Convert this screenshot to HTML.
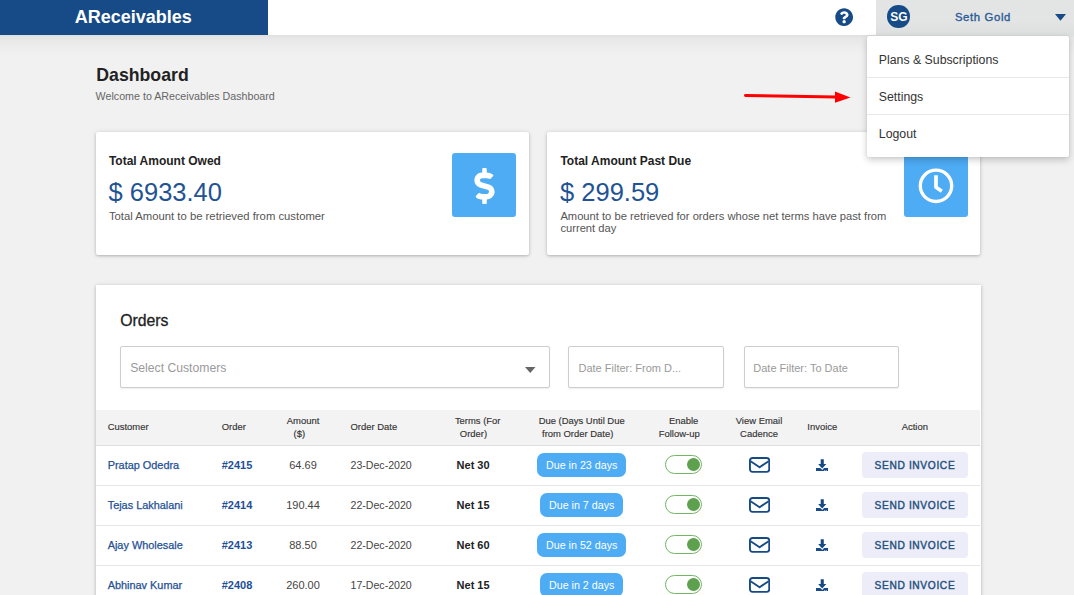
<!DOCTYPE html>
<html><head><meta charset="utf-8"><style>
html,body{margin:0;padding:0;}
body{width:1074px;height:595px;overflow:hidden;position:relative;background:#f1f1f1;font-family:"Liberation Sans", sans-serif;}
</style></head><body>
<div style="position:absolute;left:0.00px;top:35.00px;width:1074.00px;height:21.00px;background:linear-gradient(to bottom, rgba(0,0,0,0.075), rgba(0,0,0,0.045) 15%, rgba(0,0,0,0.02) 55%, rgba(0,0,0,0));"></div>
<div style="position:absolute;left:0.00px;top:0.00px;width:1074.00px;height:35.00px;background:#fff;"></div>
<div style="position:absolute;left:0.00px;top:0.00px;width:268.00px;height:35.00px;background:#174b87;"></div>
<div style="position:absolute;left:74.70px;top:7.56px;font-size:18px;line-height:18px;white-space:nowrap;color:#fff;font-weight:bold;">AReceivables</div>
<svg style="position:absolute;left:834.8px;top:8.2px" width="18.3" height="18.3" viewBox="0 0 512 512"><path fill="#174b87" d="M504 256c0 136.997-111.043 248-248 248S8 392.997 8 256C8 119.083 119.043 8 256 8s248 111.083 248 248zM262.655 90c-54.497 0-89.255 22.957-116.549 63.758-3.536 5.286-2.353 12.415 2.715 16.258l34.699 26.31c5.205 3.947 12.621 3.008 16.665-2.122 17.864-22.658 30.113-35.797 57.303-35.797 20.429 0 45.698 13.148 45.698 32.958 0 14.976-12.363 22.667-32.534 33.976C247.128 238.528 216 254.941 216 296v4c0 6.627 5.373 12 12 12h56c6.627 0 12-5.373 12-12v-1.333c0-28.462 83.186-29.647 83.186-106.667 0-58.002-60.165-102-116.531-102zM256 338c-25.365 0-46 20.635-46 46 0 25.364 20.635 46 46 46s46-20.636 46-46c0-25.365-20.635-46-46-46z"/></svg>
<div style="position:absolute;left:875.70px;top:0.00px;width:198.30px;height:35.00px;background:linear-gradient(to bottom, #e3e4e4 62%, #dddede);"></div>
<div style="position:absolute;left:887.3px;top:5.2px;width:22.5px;height:22.5px;border-radius:50%;background:#174b87;"></div>
<div style="position:absolute;left:883.90px;top:10.74px;width:30px;text-align:center;font-size:12px;line-height:12px;white-space:nowrap;color:#fff;font-weight:bold;">SG</div>
<div style="position:absolute;left:954.90px;top:12.03px;font-size:11.3px;line-height:11.3px;white-space:nowrap;color:#2a5b96;-webkit-text-stroke:0.35px #2a5b96;letter-spacing:0.65px;">Seth Gold</div>
<svg style="position:absolute;left:1055px;top:14px" width="11" height="7" viewBox="0 0 11 7"><path fill="#174b87" d="M0 0H11L5.5 6.7Z"/></svg>
<div style="position:absolute;left:96.30px;top:66.52px;font-size:17.7px;line-height:17.7px;white-space:nowrap;color:#222;font-weight:bold;">Dashboard</div>
<div style="position:absolute;left:95.60px;top:90.64px;font-size:10.7px;line-height:10.7px;white-space:nowrap;color:#666;">Welcome to AReceivables Dashboard</div>
<div style="position:absolute;left:96.00px;top:132.00px;width:432.50px;height:122.50px;background:#fff;border-radius:2px;box-shadow:0 1px 3px rgba(0,0,0,0.24), 0 0 6px rgba(0,0,0,0.07);"></div>
<div style="position:absolute;left:547.00px;top:132.00px;width:433.00px;height:122.50px;background:#fff;border-radius:2px;box-shadow:0 1px 3px rgba(0,0,0,0.24), 0 0 6px rgba(0,0,0,0.07);"></div>
<div style="position:absolute;left:108.90px;top:154.54px;font-size:12px;line-height:12px;white-space:nowrap;color:#222;font-weight:bold;">Total Amount Owed</div>
<div style="position:absolute;left:108.50px;top:179.81px;font-size:25.5px;line-height:25.5px;white-space:nowrap;color:#1f5394;">$ 6933.40</div>
<div style="position:absolute;left:108.90px;top:211.33px;font-size:11.3px;line-height:11.3px;white-space:nowrap;color:#555;">Total Amount to be retrieved from customer</div>
<div style="position:absolute;left:452.00px;top:153.00px;width:64.00px;height:64.00px;background:#4dacf4;border-radius:3px;"></div>
<svg style="position:absolute;left:473.5px;top:167.5px" width="21" height="36" viewBox="0 0 288 512"><path fill="#fff" d="M209.2 233.4l-108-31.6C88.700 198.200 80 186.500 80 173.500c0-16.300 13.200-29.500 29.500-29.500h66.300c12.200 0 24.200 3.700 34.200 10.500 6.100 4.100 14.300 3.100 19.500-2l34.800-34c7.100-6.900 6.100-18.400-1.800-24.500C238 74.800 207.400 64.100 176 64V16c0-8.800-7.200-16-16-16h-32c-8.800 0-16 7.200-16 16v48h-2.500C45.800 64-5.400 118.700.5 183.600c4.200 46.100 39.400 83.600 83.800 96.600l102.500 30c12.500 3.700 21.200 15.300 21.200 28.300 0 16.300-13.200 29.500-29.500 29.500h-66.300C100 368 88 364.300 78 357.500c-6.100-4.100-14.300-3.100-19.500 2l-34.800 34c-7.100 6.900-6.100 18.400 1.800 24.500 24.500 19.200 55.100 29.900 86.500 30v48c0 8.800 7.200 16 16 16h32c8.800 0 16-7.200 16-16v-48.200c46.600-.9 90.300-28.600 105.700-72.700 21.500-61.600-14.600-124.800-72.500-141.700z"/></svg>
<div style="position:absolute;left:560.40px;top:154.54px;font-size:12px;line-height:12px;white-space:nowrap;color:#222;font-weight:bold;">Total Amount Past Due</div>
<div style="position:absolute;left:560.00px;top:179.81px;font-size:25.5px;line-height:25.5px;white-space:nowrap;color:#1f5394;">$ 299.59</div>
<div style="position:absolute;left:560.40px;top:210.84px;font-size:11.18px;line-height:11.18px;white-space:nowrap;color:#555;">Amount to be retrieved for orders whose net terms have past from</div>
<div style="position:absolute;left:560.40px;top:222.84px;font-size:11.18px;line-height:11.18px;white-space:nowrap;color:#555;">current day</div>
<div style="position:absolute;left:904.00px;top:153.00px;width:64.00px;height:64.00px;background:#4dacf4;border-radius:3px;"></div>
<svg style="position:absolute;left:918px;top:167.5px" width="36" height="36" viewBox="0 0 36 36"><circle cx="18" cy="17.8" r="15.7" fill="none" stroke="#fff" stroke-width="3.4"/><path d="M18 7.3V19.2L23.8 23.2" fill="none" stroke="#fff" stroke-width="3.7" stroke-linejoin="round"/></svg>
<div style="position:absolute;left:867.00px;top:36.00px;width:202.00px;height:121.00px;background:#fff;border-radius:2px;box-shadow:0 3px 7px rgba(0,0,0,0.2), 0 0 3px rgba(0,0,0,0.08);"></div>
<div style="position:absolute;left:867.00px;top:77.00px;width:202.00px;height:1.00px;background:#e8e8e8;"></div>
<div style="position:absolute;left:867.00px;top:114.00px;width:202.00px;height:1.00px;background:#e8e8e8;"></div>
<div style="position:absolute;left:878.80px;top:53.89px;font-size:12.3px;line-height:12.3px;white-space:nowrap;color:#333;">Plans &amp; Subscriptions</div>
<div style="position:absolute;left:878.80px;top:90.99px;font-size:12.3px;line-height:12.3px;white-space:nowrap;color:#333;">Settings</div>
<div style="position:absolute;left:878.80px;top:128.19px;font-size:12.3px;line-height:12.3px;white-space:nowrap;color:#333;">Logout</div>
<svg style="position:absolute;left:0;top:0" width="1074" height="200"><path d="M745.5 95.5L836 97" stroke="#ff0000" stroke-width="3" stroke-linecap="round"/><path d="M835 91.4L835 102.8L850.5 97.5Z" fill="#ff0000"/></svg>
<div style="position:absolute;left:95.50px;top:285.00px;width:885.00px;height:355.00px;background:#fff;box-shadow:0 1px 3px rgba(0,0,0,0.22), 0 0 6px rgba(0,0,0,0.07);"></div>
<div style="position:absolute;left:120.20px;top:313.33px;font-size:15.8px;line-height:15.8px;white-space:nowrap;color:#222;-webkit-text-stroke:0.3px #222;">Orders</div>
<div style="position:absolute;left:120.00px;top:346.00px;width:429.50px;height:41.50px;border:1px solid #cdcdcd;box-sizing:border-box;border-radius:2px;background:#fff;box-shadow:0 1px 1.5px rgba(0,0,0,0.07);"></div>
<div style="position:absolute;left:130.20px;top:361.97px;font-size:12.2px;line-height:12.2px;white-space:nowrap;color:#9a9a9a;">Select Customers</div>
<svg style="position:absolute;left:525.3px;top:367px" width="10.5" height="6" viewBox="0 0 10.5 6"><path fill="#666" d="M0 0H10.5L5.25 6Z"/></svg>
<div style="position:absolute;left:568.40px;top:346.00px;width:155.60px;height:42.40px;border:1px solid #cdcdcd;box-sizing:border-box;border-radius:2px;background:#fff;box-shadow:0 1px 1.5px rgba(0,0,0,0.07);"></div>
<div style="position:absolute;left:578.50px;top:362.69px;font-size:11px;line-height:11px;white-space:nowrap;color:#9a9a9a;">Date Filter: From D...</div>
<div style="position:absolute;left:743.60px;top:346.00px;width:155.20px;height:42.40px;border:1px solid #cdcdcd;box-sizing:border-box;border-radius:2px;background:#fff;box-shadow:0 1px 1.5px rgba(0,0,0,0.07);"></div>
<div style="position:absolute;left:753.30px;top:362.69px;font-size:11px;line-height:11px;white-space:nowrap;color:#9a9a9a;">Date Filter: To Date</div>
<div style="position:absolute;left:96.00px;top:410.00px;width:884.00px;height:36.00px;background:#f3f3f3;border-bottom:1px solid #dedede;box-sizing:border-box;"></div>
<div style="position:absolute;left:107.70px;top:422.20px;font-size:9.45px;line-height:9.45px;white-space:nowrap;color:#333;-webkit-text-stroke:0.15px #333;">Customer</div>
<div style="position:absolute;left:221.70px;top:422.20px;font-size:9.45px;line-height:9.45px;white-space:nowrap;color:#333;-webkit-text-stroke:0.15px #333;">Order</div>
<div style="position:absolute;left:273.00px;top:415.50px;width:60px;text-align:center;font-size:9.45px;line-height:9.45px;white-space:nowrap;color:#333;-webkit-text-stroke:0.15px #333;">Amount</div>
<div style="position:absolute;left:269.30px;top:428.90px;width:60px;text-align:center;font-size:9.45px;line-height:9.45px;white-space:nowrap;color:#333;-webkit-text-stroke:0.15px #333;">($)</div>
<div style="position:absolute;left:350.50px;top:422.20px;font-size:9.45px;line-height:9.45px;white-space:nowrap;color:#333;-webkit-text-stroke:0.15px #333;">Order Date</div>
<div style="position:absolute;left:437.70px;top:415.50px;width:80px;text-align:center;font-size:9.45px;line-height:9.45px;white-space:nowrap;color:#333;-webkit-text-stroke:0.15px #333;">Terms (For</div>
<div style="position:absolute;left:433.50px;top:428.90px;width:80px;text-align:center;font-size:9.45px;line-height:9.45px;white-space:nowrap;color:#333;-webkit-text-stroke:0.15px #333;">Order)</div>
<div style="position:absolute;left:521.70px;top:415.50px;width:120px;text-align:center;font-size:9.45px;line-height:9.45px;white-space:nowrap;color:#333;-webkit-text-stroke:0.15px #333;">Due (Days Until Due</div>
<div style="position:absolute;left:517.70px;top:428.90px;width:120px;text-align:center;font-size:9.45px;line-height:9.45px;white-space:nowrap;color:#333;-webkit-text-stroke:0.15px #333;">from Order Date)</div>
<div style="position:absolute;left:643.70px;top:415.50px;width:80px;text-align:center;font-size:9.45px;line-height:9.45px;white-space:nowrap;color:#333;-webkit-text-stroke:0.15px #333;">Enable</div>
<div style="position:absolute;left:639.20px;top:428.90px;width:80px;text-align:center;font-size:9.45px;line-height:9.45px;white-space:nowrap;color:#333;-webkit-text-stroke:0.15px #333;">Follow-up</div>
<div style="position:absolute;left:719.00px;top:415.50px;width:80px;text-align:center;font-size:9.45px;line-height:9.45px;white-space:nowrap;color:#333;-webkit-text-stroke:0.15px #333;">View Email</div>
<div style="position:absolute;left:719.00px;top:428.90px;width:80px;text-align:center;font-size:9.45px;line-height:9.45px;white-space:nowrap;color:#333;-webkit-text-stroke:0.15px #333;">Cadence</div>
<div style="position:absolute;left:782.30px;top:422.20px;width:80px;text-align:center;font-size:9.45px;line-height:9.45px;white-space:nowrap;color:#333;-webkit-text-stroke:0.15px #333;">Invoice</div>
<div style="position:absolute;left:874.80px;top:422.20px;width:80px;text-align:center;font-size:9.45px;line-height:9.45px;white-space:nowrap;color:#333;-webkit-text-stroke:0.15px #333;">Action</div>
<div style="position:absolute;left:107.70px;top:460.27px;font-size:10.9px;line-height:10.9px;white-space:nowrap;color:#1f5096;-webkit-text-stroke:0.25px #1f5096;">Pratap Odedra</div>
<div style="position:absolute;left:221.70px;top:460.19px;font-size:11px;line-height:11px;white-space:nowrap;color:#1f5096;font-weight:bold;">#2415</div>
<div style="position:absolute;left:273.00px;top:460.19px;width:60px;text-align:center;font-size:11px;line-height:11px;white-space:nowrap;color:#444;">64.69</div>
<div style="position:absolute;left:350.50px;top:459.93px;font-size:10.6px;line-height:10.6px;white-space:nowrap;color:#444;">23-Dec-2020</div>
<div style="position:absolute;left:456.60px;top:460.19px;font-size:11px;line-height:11px;white-space:nowrap;color:#222;font-weight:bold;">Net 30</div>
<div style="position:absolute;left:537.00px;top:453.30px;width:89.40px;height:23.90px;background:#4dacf4;border-radius:7px;"></div>
<div style="position:absolute;left:531.70px;top:460.44px;width:100px;text-align:center;font-size:10.7px;line-height:10.7px;white-space:nowrap;color:#fff;">Due in 23 days</div>
<div style="position:absolute;left:664.90px;top:455.40px;width:37.40px;height:18.30px;border:1.4px solid #72b562;border-radius:10px;box-sizing:border-box;background:#fff;"></div>
<div style="position:absolute;left:686.7px;top:458.00px;width:13.4px;height:13.4px;border-radius:50%;background:#5da04e;"></div>
<svg style="position:absolute;left:748.8px;top:457.00px" width="21.2" height="15.8" viewBox="0 0 21.2 15.8"><rect x="0.95" y="0.95" width="19.3" height="13.9" rx="2.5" fill="none" stroke="#174b87" stroke-width="1.9"/><path d="M1.6 4.2L10.6 10.2L19.6 4.2" fill="none" stroke="#174b87" stroke-width="1.9" stroke-linejoin="round"/></svg>
<svg style="position:absolute;left:815.9px;top:458.80px" width="12.4" height="12.6" viewBox="0 0 12.4 12.6"><path fill="#174b87" d="M4.7 0.2H7.8V4.9H10.3L6.25 9.6L2.1 4.9H4.7Z"/><path fill="#174b87" d="M0 8.9H4.4L6.25 10.9L8.1 8.9H12.4V12.6H0Z"/><circle cx="8.6" cy="11.7" r="0.55" fill="#fff"/><circle cx="10.2" cy="11.7" r="0.55" fill="#fff"/></svg>
<div style="position:absolute;left:861.50px;top:452.20px;width:106.90px;height:26.00px;background:#ededf9;border-radius:4px;"></div>
<div style="position:absolute;left:874.50px;top:461.37px;font-size:10.2px;line-height:10.2px;white-space:nowrap;color:#25507e;-webkit-text-stroke:0.4px #25507e;letter-spacing:0.65px;">SEND INVOICE</div>
<div style="position:absolute;left:96.00px;top:485.00px;width:884.00px;height:1.00px;background:#e6e6e6;"></div>
<div style="position:absolute;left:107.70px;top:500.27px;font-size:10.9px;line-height:10.9px;white-space:nowrap;color:#1f5096;-webkit-text-stroke:0.25px #1f5096;">Tejas Lakhalani</div>
<div style="position:absolute;left:221.70px;top:500.19px;font-size:11px;line-height:11px;white-space:nowrap;color:#1f5096;font-weight:bold;">#2414</div>
<div style="position:absolute;left:273.00px;top:500.19px;width:60px;text-align:center;font-size:11px;line-height:11px;white-space:nowrap;color:#444;">190.44</div>
<div style="position:absolute;left:350.50px;top:499.93px;font-size:10.6px;line-height:10.6px;white-space:nowrap;color:#444;">22-Dec-2020</div>
<div style="position:absolute;left:456.60px;top:500.19px;font-size:11px;line-height:11px;white-space:nowrap;color:#222;font-weight:bold;">Net 15</div>
<div style="position:absolute;left:540.00px;top:493.30px;width:83.40px;height:23.90px;background:#4dacf4;border-radius:7px;"></div>
<div style="position:absolute;left:531.70px;top:500.44px;width:100px;text-align:center;font-size:10.7px;line-height:10.7px;white-space:nowrap;color:#fff;">Due in 7 days</div>
<div style="position:absolute;left:664.90px;top:495.40px;width:37.40px;height:18.30px;border:1.4px solid #72b562;border-radius:10px;box-sizing:border-box;background:#fff;"></div>
<div style="position:absolute;left:686.7px;top:498.00px;width:13.4px;height:13.4px;border-radius:50%;background:#5da04e;"></div>
<svg style="position:absolute;left:748.8px;top:497.00px" width="21.2" height="15.8" viewBox="0 0 21.2 15.8"><rect x="0.95" y="0.95" width="19.3" height="13.9" rx="2.5" fill="none" stroke="#174b87" stroke-width="1.9"/><path d="M1.6 4.2L10.6 10.2L19.6 4.2" fill="none" stroke="#174b87" stroke-width="1.9" stroke-linejoin="round"/></svg>
<svg style="position:absolute;left:815.9px;top:498.80px" width="12.4" height="12.6" viewBox="0 0 12.4 12.6"><path fill="#174b87" d="M4.7 0.2H7.8V4.9H10.3L6.25 9.6L2.1 4.9H4.7Z"/><path fill="#174b87" d="M0 8.9H4.4L6.25 10.9L8.1 8.9H12.4V12.6H0Z"/><circle cx="8.6" cy="11.7" r="0.55" fill="#fff"/><circle cx="10.2" cy="11.7" r="0.55" fill="#fff"/></svg>
<div style="position:absolute;left:861.50px;top:492.20px;width:106.90px;height:26.00px;background:#ededf9;border-radius:4px;"></div>
<div style="position:absolute;left:874.50px;top:501.37px;font-size:10.2px;line-height:10.2px;white-space:nowrap;color:#25507e;-webkit-text-stroke:0.4px #25507e;letter-spacing:0.65px;">SEND INVOICE</div>
<div style="position:absolute;left:96.00px;top:525.00px;width:884.00px;height:1.00px;background:#e6e6e6;"></div>
<div style="position:absolute;left:107.70px;top:540.27px;font-size:10.9px;line-height:10.9px;white-space:nowrap;color:#1f5096;-webkit-text-stroke:0.25px #1f5096;">Ajay Wholesale</div>
<div style="position:absolute;left:221.70px;top:540.19px;font-size:11px;line-height:11px;white-space:nowrap;color:#1f5096;font-weight:bold;">#2413</div>
<div style="position:absolute;left:273.00px;top:540.19px;width:60px;text-align:center;font-size:11px;line-height:11px;white-space:nowrap;color:#444;">88.50</div>
<div style="position:absolute;left:350.50px;top:539.93px;font-size:10.6px;line-height:10.6px;white-space:nowrap;color:#444;">22-Dec-2020</div>
<div style="position:absolute;left:456.60px;top:540.19px;font-size:11px;line-height:11px;white-space:nowrap;color:#222;font-weight:bold;">Net 60</div>
<div style="position:absolute;left:537.00px;top:533.30px;width:89.40px;height:23.90px;background:#4dacf4;border-radius:7px;"></div>
<div style="position:absolute;left:531.70px;top:540.44px;width:100px;text-align:center;font-size:10.7px;line-height:10.7px;white-space:nowrap;color:#fff;">Due in 52 days</div>
<div style="position:absolute;left:664.90px;top:535.40px;width:37.40px;height:18.30px;border:1.4px solid #72b562;border-radius:10px;box-sizing:border-box;background:#fff;"></div>
<div style="position:absolute;left:686.7px;top:538.00px;width:13.4px;height:13.4px;border-radius:50%;background:#5da04e;"></div>
<svg style="position:absolute;left:748.8px;top:537.00px" width="21.2" height="15.8" viewBox="0 0 21.2 15.8"><rect x="0.95" y="0.95" width="19.3" height="13.9" rx="2.5" fill="none" stroke="#174b87" stroke-width="1.9"/><path d="M1.6 4.2L10.6 10.2L19.6 4.2" fill="none" stroke="#174b87" stroke-width="1.9" stroke-linejoin="round"/></svg>
<svg style="position:absolute;left:815.9px;top:538.80px" width="12.4" height="12.6" viewBox="0 0 12.4 12.6"><path fill="#174b87" d="M4.7 0.2H7.8V4.9H10.3L6.25 9.6L2.1 4.9H4.7Z"/><path fill="#174b87" d="M0 8.9H4.4L6.25 10.9L8.1 8.9H12.4V12.6H0Z"/><circle cx="8.6" cy="11.7" r="0.55" fill="#fff"/><circle cx="10.2" cy="11.7" r="0.55" fill="#fff"/></svg>
<div style="position:absolute;left:861.50px;top:532.20px;width:106.90px;height:26.00px;background:#ededf9;border-radius:4px;"></div>
<div style="position:absolute;left:874.50px;top:541.37px;font-size:10.2px;line-height:10.2px;white-space:nowrap;color:#25507e;-webkit-text-stroke:0.4px #25507e;letter-spacing:0.65px;">SEND INVOICE</div>
<div style="position:absolute;left:96.00px;top:565.00px;width:884.00px;height:1.00px;background:#e6e6e6;"></div>
<div style="position:absolute;left:107.70px;top:580.27px;font-size:10.9px;line-height:10.9px;white-space:nowrap;color:#1f5096;-webkit-text-stroke:0.25px #1f5096;">Abhinav Kumar</div>
<div style="position:absolute;left:221.70px;top:580.19px;font-size:11px;line-height:11px;white-space:nowrap;color:#1f5096;font-weight:bold;">#2408</div>
<div style="position:absolute;left:273.00px;top:580.19px;width:60px;text-align:center;font-size:11px;line-height:11px;white-space:nowrap;color:#444;">260.00</div>
<div style="position:absolute;left:350.50px;top:579.93px;font-size:10.6px;line-height:10.6px;white-space:nowrap;color:#444;">17-Dec-2020</div>
<div style="position:absolute;left:456.60px;top:580.19px;font-size:11px;line-height:11px;white-space:nowrap;color:#222;font-weight:bold;">Net 15</div>
<div style="position:absolute;left:540.00px;top:573.30px;width:83.40px;height:23.90px;background:#4dacf4;border-radius:7px;"></div>
<div style="position:absolute;left:531.70px;top:580.44px;width:100px;text-align:center;font-size:10.7px;line-height:10.7px;white-space:nowrap;color:#fff;">Due in 2 days</div>
<div style="position:absolute;left:664.90px;top:575.40px;width:37.40px;height:18.30px;border:1.4px solid #72b562;border-radius:10px;box-sizing:border-box;background:#fff;"></div>
<div style="position:absolute;left:686.7px;top:578.00px;width:13.4px;height:13.4px;border-radius:50%;background:#5da04e;"></div>
<svg style="position:absolute;left:748.8px;top:577.00px" width="21.2" height="15.8" viewBox="0 0 21.2 15.8"><rect x="0.95" y="0.95" width="19.3" height="13.9" rx="2.5" fill="none" stroke="#174b87" stroke-width="1.9"/><path d="M1.6 4.2L10.6 10.2L19.6 4.2" fill="none" stroke="#174b87" stroke-width="1.9" stroke-linejoin="round"/></svg>
<svg style="position:absolute;left:815.9px;top:578.80px" width="12.4" height="12.6" viewBox="0 0 12.4 12.6"><path fill="#174b87" d="M4.7 0.2H7.8V4.9H10.3L6.25 9.6L2.1 4.9H4.7Z"/><path fill="#174b87" d="M0 8.9H4.4L6.25 10.9L8.1 8.9H12.4V12.6H0Z"/><circle cx="8.6" cy="11.7" r="0.55" fill="#fff"/><circle cx="10.2" cy="11.7" r="0.55" fill="#fff"/></svg>
<div style="position:absolute;left:861.50px;top:572.20px;width:106.90px;height:26.00px;background:#ededf9;border-radius:4px;"></div>
<div style="position:absolute;left:874.50px;top:581.37px;font-size:10.2px;line-height:10.2px;white-space:nowrap;color:#25507e;-webkit-text-stroke:0.4px #25507e;letter-spacing:0.65px;">SEND INVOICE</div>
</body></html>
